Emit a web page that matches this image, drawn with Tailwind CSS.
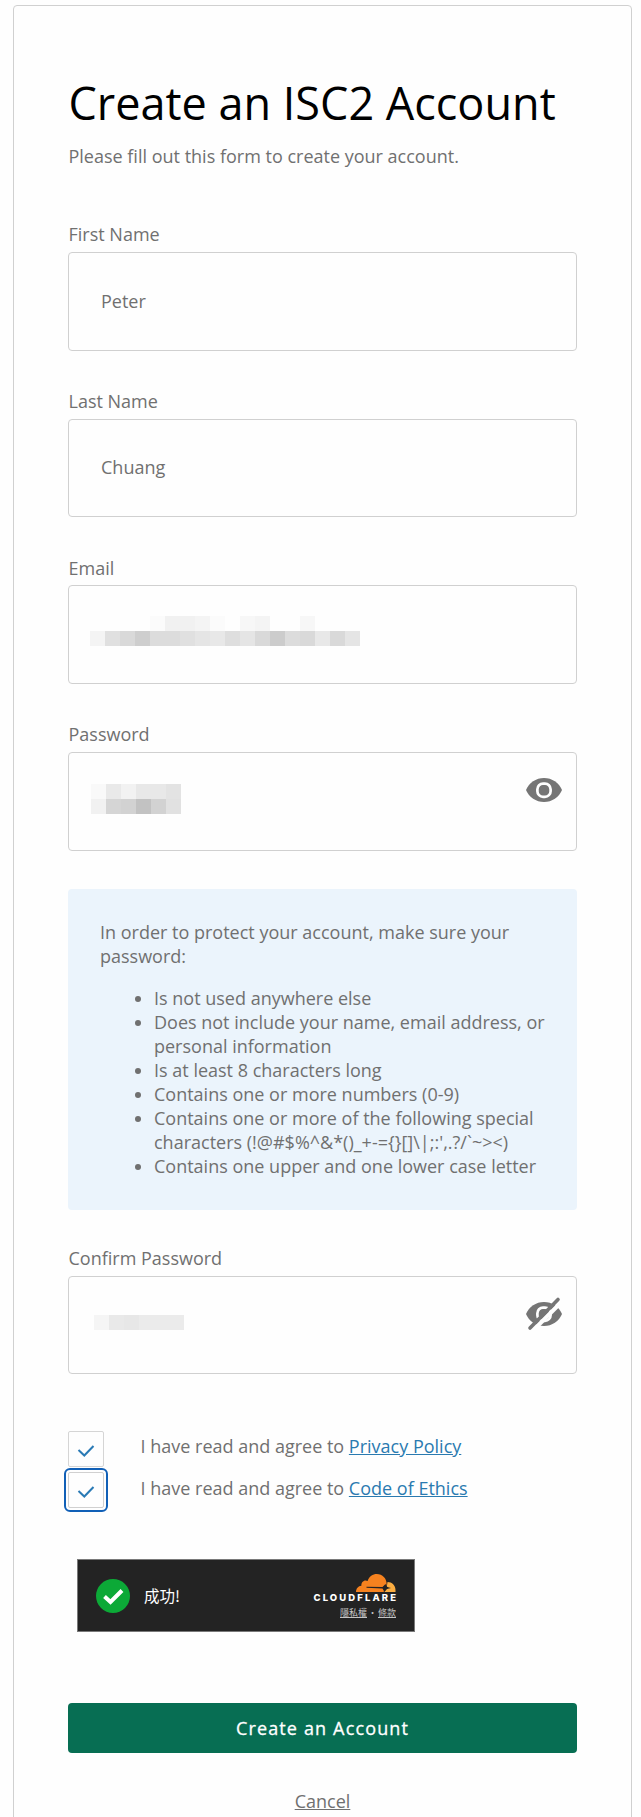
<!DOCTYPE html>
<html lang="en">
<head>
<meta charset="utf-8">
<title>Create an ISC2 Account</title>
<script src="https://cdn.jsdelivr.net/npm/@tailwindcss/browser@4"></script>
</head>
<body class="bg-[#fefefe] h-[1817px] overflow-hidden pt-[5px] pl-[13px] font-['Open_Sans',sans-serif] text-[18px] leading-6 text-[#707070]">
<main class="w-[619px] h-[1830px] border border-[#d0d0d0] rounded-[4px] pl-[54px] pr-[54px] pt-[65px]">
  <h1 class="h-[68px] pl-[0.5px] leading-[64px] text-[45px] text-black whitespace-nowrap">Create an ISC2 Account</h1>
  <p class="mt-[5px] pl-[0.5px]">Please fill out this form to create your account.</p>

  <form>
    <div class="mt-[54px] flex flex-col">
      <label class="h-[30px] pl-[0.5px]">First Name</label>
      <div class="h-[99px] border border-[#d0d0d0] rounded-[4px] flex items-center pl-8 pb-px">Peter</div>
    </div>
    <div class="mt-[38px] flex flex-col">
      <label class="h-[30px] pl-[0.5px]">Last Name</label>
      <div class="h-[98px] border border-[#d0d0d0] rounded-[4px] flex items-center pl-8 pb-[2px]">Chuang</div>
    </div>
    <div class="mt-[39px] flex flex-col">
      <label class="h-[29px] pl-[0.5px]">Email</label>
      <div class="h-[99px] border border-[#d0d0d0] rounded-[4px] pl-[21px] pt-[30px]">
        <svg class="block" width="270" height="30" shape-rendering="crispEdges">
          <path fill="#fbfbfb" d="M60 0h15v15H60zM120 0h15v15h-15z"/>
          <path fill="#f1f1f1" d="M75 0h30v15H75z"/>
          <path fill="#f4f4f4" d="M105 0h15v15h-15zM165 0h15v15h-15zM0 15h15v15H0z"/>
          <path fill="#f7f7f7" d="M150 0h15v15h-15zM210 0h15v15h-15z"/>
          <path fill="#e0e0e0" d="M15 15h15v15H15zM90 15h15v15H90z"/>
          <path fill="#d9d9d9" d="M30 15h15v15H30zM165 15h15v15h-15zM210 15h15v15h-15zM240 15h15v15h-15z"/>
          <path fill="#cecece" d="M45 15h15v15H45z"/>
          <path fill="#dcdcdc" d="M60 15h30v15H60zM195 15h15v15h-15z"/>
          <path fill="#e5e5e5" d="M105 15h15v15h-15zM150 15h15v15h-15zM255 15h15v15h-15z"/>
          <path fill="#e8e8e8" d="M120 15h15v15h-15zM225 15h15v15h-15z"/>
          <path fill="#dedede" d="M135 15h15v15h-15z"/>
          <path fill="#cccccc" d="M180 15h15v15h-15z"/>
        </svg>
      </div>
    </div>
    <div class="mt-[38px] flex flex-col">
      <label class="h-[30px] pl-[0.5px]">Password</label>
      <div class="h-[99px] border border-[#d0d0d0] rounded-[4px] flex items-start justify-between pl-[22px] pr-[12px]">
        <svg class="block mt-[31px]" width="90" height="30" shape-rendering="crispEdges">
          <path fill="#f9f9f9" d="M0 0h15v15H0z"/><path fill="#e9e9e9" d="M15 0h15v15H15z"/><path fill="#f2f2f2" d="M30 0h15v15H30z"/><path fill="#e8e8e8" d="M45 0h30v15H45z"/><path fill="#e3e3e3" d="M75 0h15v15H75z"/>
          <path fill="#f1f1f1" d="M0 15h15v15H0z"/><path fill="#d5d5d5" d="M15 15h15v15H15z"/><path fill="#d2d2d2" d="M30 15h15v15H30zM60 15h15v15H60z"/><path fill="#c2c2c2" d="M45 15h15v15H45z"/><path fill="#e1e1e1" d="M75 15h15v15H75z"/>
        </svg>
        <svg class="block mt-[17px]" width="40" height="40" viewBox="0 0 40 40">
          <path fill="#757575" d="M2 20C5 12.8 12 8 20 8s15 4.8 18 12c-3 7.2-10 12-18 12S5 27.2 2 20z"/>
          <rect x="13.4" y="13.6" width="13.2" height="13.2" rx="5.6" fill="none" stroke="#fefefe" stroke-width="2.7"/>
        </svg>
      </div>
    </div>

    <section class="mt-[38px] h-[321px] bg-[#ebf4fc] rounded-[4px] pt-[31px] pl-[32px] pr-[20px]">
      <p>In order to protect your account, make sure your<br>password:</p>
      <ul class="mt-[18px] list-disc pl-[54px]">
        <li>Is not used anywhere else</li>
        <li>Does not include your name, email address, or<br>personal information</li>
        <li>Is at least 8 characters long</li>
        <li>Contains one or more numbers (0-9)</li>
        <li>Contains one or more of the following special<br>characters (!@#$%^&amp;*()_+-={}[]\|;:',.?/`~&gt;&lt;)</li>
        <li>Contains one upper and one lower case letter</li>
      </ul>
    </section>

    <div class="mt-[36px] flex flex-col">
      <label class="h-[30px] pl-[0.5px]">Confirm Password</label>
      <div class="h-[98px] border border-[#d0d0d0] rounded-[4px] flex items-start justify-between pl-[25px] pr-[12px]">
        <svg class="block mt-[38px]" width="90" height="15" shape-rendering="crispEdges">
          <path fill="#f5f5f5" d="M0 0h15v15H0z"/><path fill="#e9e9e9" d="M15 0h15v15H15z"/><path fill="#e7e7e7" d="M30 0h15v15H30z"/><path fill="#ebebeb" d="M45 0h45v15H45z"/>
        </svg>
        <svg class="block mt-[17px]" width="40" height="40" viewBox="0 0 40 40">
          <path fill="#757575" d="M2 20C5 12.8 12 8 20 8s15 4.8 18 12c-3 7.2-10 12-18 12S5 27.2 2 20z"/>
          <rect x="13.4" y="13.6" width="13.2" height="13.2" rx="5.6" fill="none" stroke="#fefefe" stroke-width="2.7"/>
          <path d="M36.5 9L9 36.5" stroke="#fefefe" stroke-width="4" fill="none"/>
          <path d="M34 5.500L6 34" stroke="#757575" stroke-width="3.600" stroke-linecap="round" fill="none"/>
        </svg>
      </div>
    </div>

    <div class="mt-[57px] flex h-[36px]">
      <span class="size-9 border border-[#d5d5d5] rounded-[2px]">
        <svg class="block" width="34" height="34" viewBox="1 1 34 34" fill="none" stroke="#2a7ab5" stroke-width="2"><path d="M10.500 19L16.300 24.500L25.500 15"/></svg>
      </span>
      <span class="ml-[36.500px] mt-[3px]">I have read and agree to <a class="text-[#2a7ab0] underline">Privacy Policy</a></span>
    </div>
    <div class="mt-[5px] flex h-[36px]">
      <span class="size-9 border border-[#d0d0d0] rounded-[2px] outline-2 outline-offset-[2.500px] outline-[#1160b7]">
        <svg class="block" width="34" height="34" viewBox="1 1 34 34" fill="none" stroke="#2a7ab5" stroke-width="2"><path d="M10.500 19L16.300 24.500L25.500 15"/></svg>
      </span>
      <span class="ml-[36.500px] mt-[4px]">I have read and agree to <a class="text-[#2a7ab0] underline">Code of Ethics</a></span>
    </div>

    <div class="mt-[51px] ml-[9px] w-[338px] h-[73px] border border-[#797979] bg-[#232323] flex items-center justify-between pl-[18px] pr-[18px] text-white">
      <div class="flex items-center">
        <svg class="block" width="34" height="34" viewBox="0 0 34 34"><circle cx="17" cy="17" r="17" fill="#0ca937"/><path d="M8.500 17.500L14.500 23L26 11.500" fill="none" stroke="#fff" stroke-width="4"/></svg>
        <span class="ml-[14px] pb-[2px] text-[15.500px] font-['Noto_Sans_CJK_TC',sans-serif]">成功!</span>
      </div>
      <div class="flex flex-col items-end pt-[1px]">
        <svg class="block" width="40" height="18" viewBox="0 0 40 18">
          <path fill="#f6821f" d="M0 18C0 14.500 2.200 12 5.400 11.700C5 8 8.500 5.200 11.600 7C13 2.600 16.800 0 20.800 0C26.500 0 30.600 4.500 30.600 9.500C30.500 12.500 29 15.500 27.500 18z"/>
          <path fill="#fbad41" d="M31.500 8C36 8 39.500 11.500 39.500 16V18H28C28.500 16 30 14.500 32.500 13.700L30.800 12.500z"/>
          <path fill="#232323" d="M10.500 12.800L26.500 13L29.500 10L31 13L35 14L31 15L28.500 18L26.500 14.500L10.500 13.800z"/>
        </svg>
        <span class="mt-[1px] h-[10px] leading-[10px] text-[9.500px] font-extrabold tracking-[2.100px] -mr-[2.100px] font-['Inter',sans-serif]">CLOUDFLARE</span>
        <span class="mt-[4px] h-[12px] leading-[12px] text-[9px] text-[#c4c4c4] font-['Noto_Sans_CJK_TC',sans-serif] flex"><a class="border-b border-[#c4c4c4] h-[11px]">隱私權</a><span class="w-[11px] text-center">•</span><a class="border-b border-[#c4c4c4] h-[11px]">條款</a></span>
      </div>
    </div>

    <button type="button" class="mt-[71px] block w-full h-[50px] rounded-[4px] bg-[#076e53] text-white tracking-[1.150px] [-webkit-text-stroke:0.3px_white]">Create an Account</button>
    <div class="mt-[36px] text-center"><a class="underline">Cancel</a></div>
  </form>
</main>
</body>
</html>
